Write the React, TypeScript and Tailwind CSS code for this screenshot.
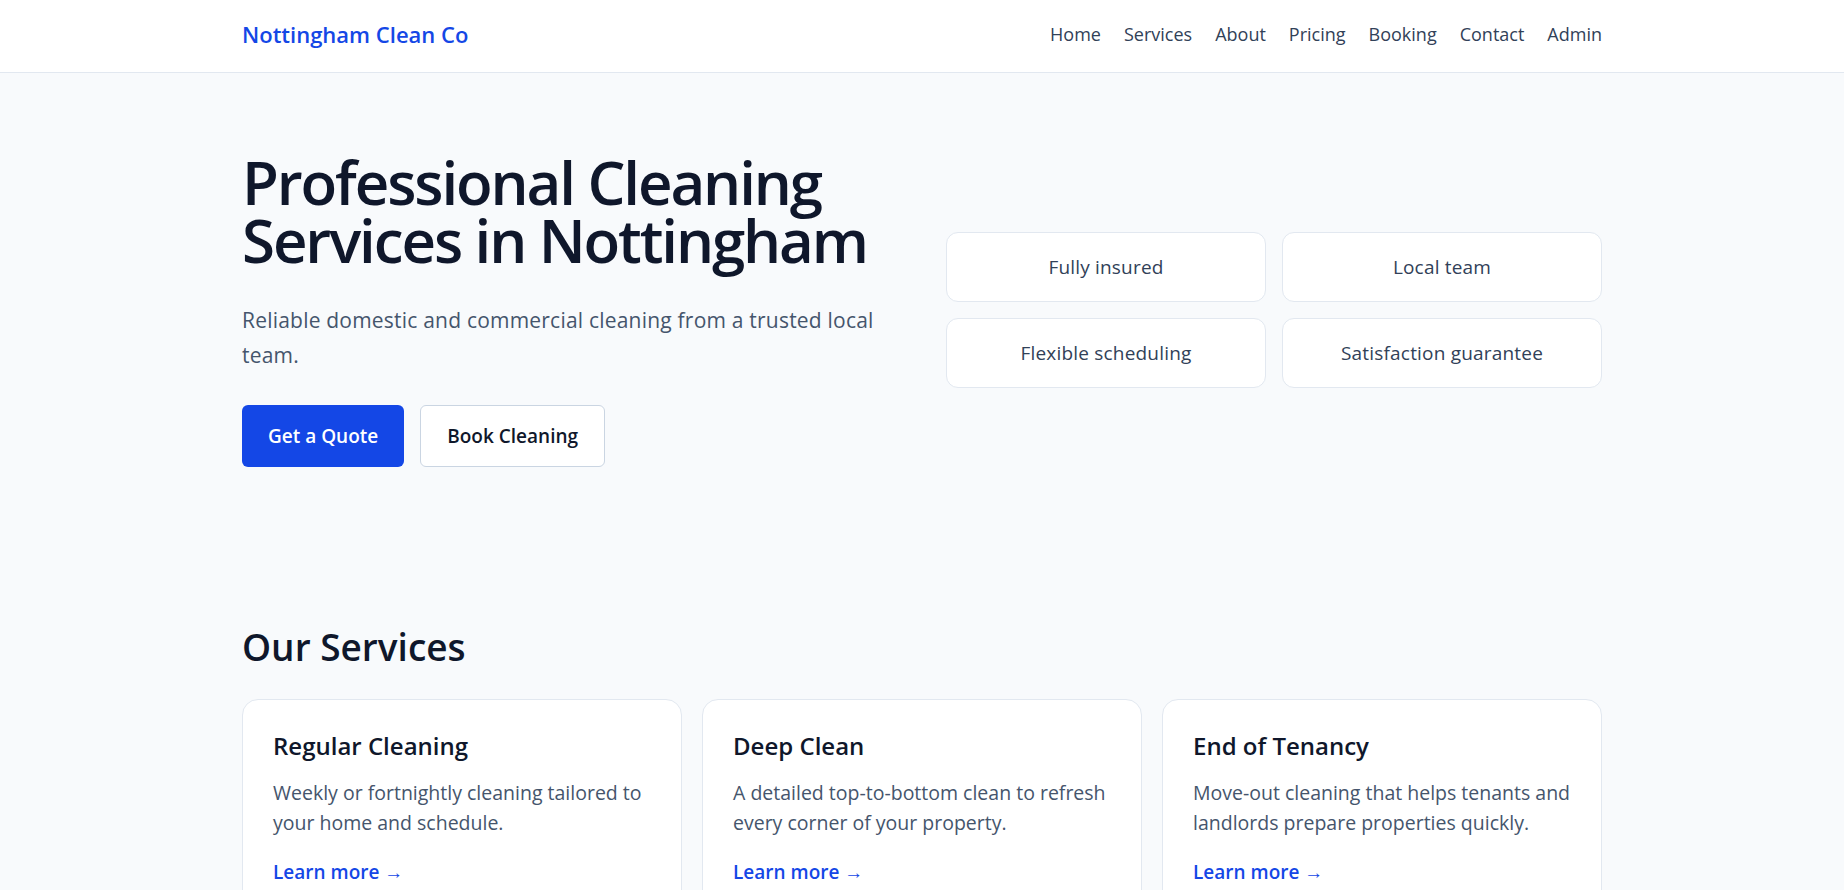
const navLinks = ['Home', 'Services', 'About', 'Pricing', 'Booking', 'Contact', 'Admin']

const highlights = ['Fully insured', 'Local team', 'Flexible scheduling', 'Satisfaction guarantee']

const services = [
  {
    title: 'Regular Cleaning',
    description: 'Weekly or fortnightly cleaning tailored to your home and schedule.',
  },
  {
    title: 'Deep Clean',
    description: 'A detailed top-to-bottom clean to refresh every corner of your property.',
  },
  {
    title: 'End of Tenancy',
    description: 'Move-out cleaning that helps tenants and landlords prepare properties quickly.',
  },
]

function Header() {
  return (
    <header className="border-b border-slate-200 bg-white">
      <div className="mx-auto flex h-[72px] max-w-[1360px] items-center justify-between pb-1">
        <a href="#" className="text-[22px] font-semibold text-blue-700">
          Nottingham Clean Co
        </a>
        <nav className="flex items-center gap-[23px] text-lg text-slate-700">
          {navLinks.map((link) => (
            <a key={link} href="#" className="hover:text-blue-700">
              {link}
            </a>
          ))}
        </nav>
      </div>
    </header>
  )
}

function Hero() {
  return (
    <section className="mx-auto grid max-w-[1360px] grid-cols-2 items-center gap-12 py-20">
      <div>
        <h1 className="text-6xl leading-[58px] font-semibold tracking-[-0.035em] text-slate-900">
          Professional Cleaning Services in Nottingham
        </h1>
        <p className="mt-[34px] text-[21px] leading-[35px] tracking-[0.01em] text-slate-600">
          Reliable domestic and commercial cleaning from a trusted local team.
        </p>
        <div className="mt-8 flex gap-4">
          <button
            type="button"
            className="rounded-md bg-blue-700 px-[26px] py-4 text-[19px] leading-7 font-semibold text-white"
          >
            Get a Quote
          </button>
          <button
            type="button"
            className="rounded-md border border-slate-300 bg-white px-[26px] py-4 text-[19px] leading-7 font-semibold text-slate-900"
          >
            Book Cleaning
          </button>
        </div>
      </div>
      <div className="grid grid-cols-2 gap-4">
        {highlights.map((item) => (
          <div
            key={item}
            className="rounded-xl border border-slate-200 bg-white py-5 text-center text-[19px] leading-7 tracking-[0.01em] text-slate-700"
          >
            {item}
          </div>
        ))}
      </div>
    </section>
  )
}

function Services() {
  return (
    <section className="mx-auto max-w-[1360px] pt-20 pb-16">
      <h2 className="text-[37px] leading-10 font-semibold text-slate-900">Our Services</h2>
      <div className="mt-8 grid grid-cols-3 gap-5">
        {services.map((service) => (
          <article key={service.title} className="rounded-2xl border border-slate-200 bg-white p-[30px]">
            <h3 className="text-2xl font-semibold text-slate-900">{service.title}</h3>
            <p className="mt-4 text-[19.5px] leading-[30px] text-slate-600">{service.description}</p>
            <a href="#" className="mt-5 inline-block text-[19px] leading-7 font-semibold text-blue-700">
              Learn more →
            </a>
          </article>
        ))}
      </div>
    </section>
  )
}

export default function App() {
  return (
    <div className="min-h-screen bg-slate-50 font-['Open_Sans',sans-serif]">
      <Header />
      <Hero />
      <Services />
    </div>
  )
}
